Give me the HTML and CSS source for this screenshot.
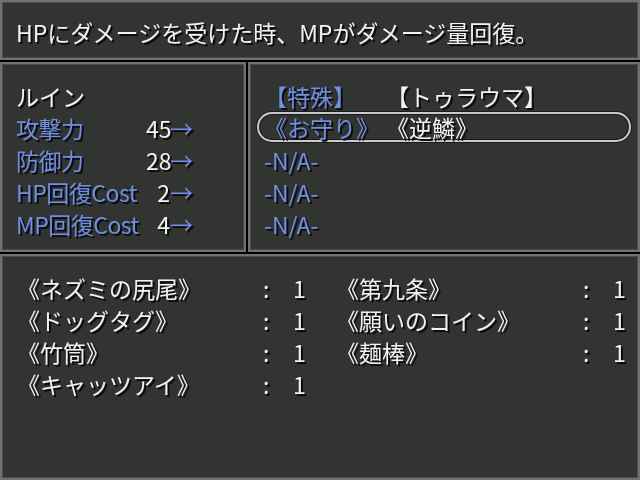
FILE: index.html
```html
<!DOCTYPE html>
<html lang="ja">
<head>
<meta charset="utf-8">
<link rel="stylesheet" href="styles.css">
</head>
<body>
<div class="screen">
  <div class="win help">
    <span class="t w">HPにダメージを受けた時、MPがダメージ量回復。</span>
  </div>
  <div class="mid">
    <div class="win status">
      <div class="srow"><span class="t w">ルイン</span></div>
      <div class="srow"><span class="t b lbl">攻撃力</span><span class="t w num">45</span><span class="t b arr">→</span></div>
      <div class="srow"><span class="t b lbl">防御力</span><span class="t w num">28</span><span class="t b arr">→</span></div>
      <div class="srow"><span class="t b lbl">HP回復Cost</span><span class="t w num">2</span><span class="t b arr">→</span></div>
      <div class="srow"><span class="t b lbl">MP回復Cost</span><span class="t w num">4</span><span class="t b arr">→</span></div>
    </div>
    <div class="win skills">
      <div class="krow"><span class="t b c1 br">【特殊】</span><span class="t w">【トゥラウマ】</span></div>
      <div class="krow sel"><div class="cursor"><span class="t b c1 br">《お守り》</span><span class="t w">《逆鱗》</span></div></div>
      <div class="krow na"><span class="t b">-N/A-</span></div>
      <div class="krow na"><span class="t b">-N/A-</span></div>
      <div class="krow na"><span class="t b">-N/A-</span></div>
    </div>
  </div>
  <div class="win items">
    <span class="t w br">《ネズミの尻尾》</span><span class="t w">:</span><span class="t w">1</span>
    <span class="t w br">《第九条》</span><span class="t w">:</span><span class="t w">1</span>
    <span class="t w br">《ドッグタグ》</span><span class="t w">:</span><span class="t w">1</span>
    <span class="t w br">《願いのコイン》</span><span class="t w">:</span><span class="t w">1</span>
    <span class="t w br">《竹筒》</span><span class="t w">:</span><span class="t w">1</span>
    <span class="t w br">《麺棒》</span><span class="t w">:</span><span class="t w">1</span>
    <span class="t w br">《キャッツアイ》</span><span class="t w">:</span><span class="t w">1</span>
  </div>
</div>
</body>
</html>
```

FILE: styles.css
```css
* { box-sizing: border-box; }
html, body { margin: 0; padding: 0; background: #000; }
body {
  width: 640px;
  height: 480px;
  overflow: hidden;
  font-family: "Noto Sans CJK JP", "DejaVu Sans", sans-serif;
  font-size: 23px;
}
.screen {
  display: flex;
  flex-direction: column;
  gap: 2px;
  width: 640px;
  height: 480px;
}
.win {
  background: #323432;
  border: 2px solid #6e7072;
  box-shadow: inset 0 0 0 1px #4a4c4d;
}
.t {
  white-space: nowrap;
  line-height: 32px;
  filter: drop-shadow(2px 2px 0 #0c0c0c);
}
.w { color: #f2f2f2; }
.b { color: #6f8fe2; }
.br { margin-left: -11px; }

.help {
  height: 60px;
  display: flex;
  align-items: center;
  padding: 4px 0 0 14px;
}

.mid {
  display: flex;
  gap: 2px;
  height: 190px;
}
.status {
  width: 246px;
  padding: 16px 0 0 14px;
}
.srow {
  display: grid;
  grid-template-columns: 130px 24px auto;
  height: 32px;
}
.srow .lbl { letter-spacing: -0.5px; }
.srow .num { text-align: right; }
.skills {
  flex: 1;
  padding: 16px 0 0 0;
}
.krow {
  display: flex;
  height: 32px;
  align-items: center;
  padding-left: 25px;
}
.krow .c1 { width: 122px; }
.krow.sel { padding-left: 7px; }
.cursor {
  display: flex;
  align-items: center;
  width: 374px;
  height: 30px;
  margin-bottom: 2px;
  padding-left: 16px;
  border: 2px solid #c9cacb;
  border-radius: 15px;
  box-shadow: 0 0 0 1px #1a1a1a, inset 0 0 0 1px #1a1a1a;
}
.krow.na { padding-left: 14px; }

.items {
  flex: 1;
  display: grid;
  grid-template-columns: 235px 30px 54px 236px 30px auto;
  grid-auto-rows: 32px;
  align-content: start;
  padding: 16px 0 0 26px;
}
```
